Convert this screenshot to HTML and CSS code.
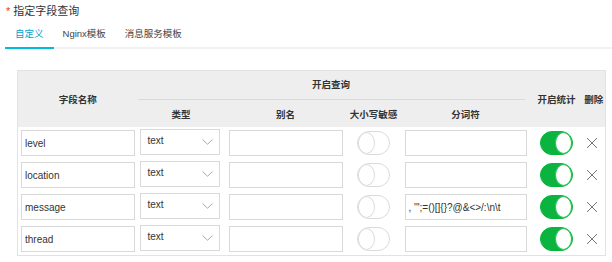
FILE: index.html
```html
<!DOCTYPE html>
<html lang="zh-CN">
<head>
    <meta charset="UTF-8">
    <meta name="viewport" content="width=device-width, initial-scale=1.0">
    <title>指定字段查询</title>
    <link rel="stylesheet" href="styles.css">
</head>
<body>
    <div class="field-title"><span class="required">*</span> 指定字段查询</div>

    <div class="tabs">
        <div class="tab active">自定义</div>
        <div class="tab">Nginx模板</div>
        <div class="tab">消息服务模板</div>
    </div>

    <table class="fields">
        <colgroup>
            <col class="c-name">
            <col class="c-type">
            <col class="c-alias">
            <col class="c-case">
            <col class="c-token">
            <col class="c-stat">
            <col class="c-del">
        </colgroup>
        <thead>
            <tr class="head-top">
                <th rowspan="2">字段名称</th>
                <th colspan="4" class="group"><span>开启查询</span></th>
                <th rowspan="2">开启统计</th>
                <th rowspan="2">删除</th>
            </tr>
            <tr class="head-sub">
                <th>类型</th>
                <th>别名</th>
                <th>大小写敏感</th>
                <th>分词符</th>
            </tr>
        </thead>
        <tbody id="rows"></tbody>
    </table>

    <script>
        const fields = [
            { name: 'level', type: 'text', token: '' },
            { name: 'location', type: 'text', token: '' },
            { name: 'message', type: 'text', token: ', \'";=()[]{}?@&<>/:\\n\\t' },
            { name: 'thread', type: 'text', token: '' }
        ];

        const tbody = document.getElementById('rows');

        fields.forEach(field => {
            const tr = document.createElement('tr');
            tr.innerHTML = `
                <td class="cell-name"><input class="text-input name-input" type="text"></td>
                <td class="cell-type">
                    <div class="select">
                        <span>${field.type}</span>
                        <svg width="11" height="6" viewBox="0 0 11 6"><path d="M0.5 0.5 L5.5 5.2 L10.5 0.5" fill="none" stroke="#a0a0a0" stroke-width="0.9"/></svg>
                    </div>
                </td>
                <td class="cell-alias"><input class="text-input alias-input" type="text"></td>
                <td class="cell-case"><span class="switch"><span class="knob"></span></span></td>
                <td class="cell-token"><input class="text-input token-input" type="text"></td>
                <td class="cell-stat"><span class="switch on"><span class="knob"></span></span></td>
                <td class="cell-del">
                    <svg class="del" width="12" height="12" viewBox="0 0 12 12"><path d="M1 1 L11 11 M11 1 L1 11" stroke="#666" stroke-width="0.9"/></svg>
                </td>`;
            tr.querySelector('.name-input').value = field.name;
            tr.querySelector('.token-input').value = field.token;
            tbody.appendChild(tr);
        });
    </script>
</body>
</html>
```

FILE: styles.css
```css
body {
    margin: 0;
    font-family: "Liberation Sans", "Noto Sans CJK SC", sans-serif;
    font-size: 10px;
    color: #333;
    background: #fff;
}
.field-title {
    padding: 4px 0 0 6px;
    height: 16px;
    font-size: 11px;
    line-height: 14px;
    color: #333;
}
.required {
    color: #e5393c;
}
.tabs {
    display: flex;
    margin: 2px 0 0 5px;
    border-bottom: 2px solid #f1f1f1;
}
.tab {
    padding: 5px 10px 6px;
    line-height: 14px;
    font-size: 9.5px;
    color: #444;
    margin-bottom: -2px;
    border-bottom: 2px solid transparent;
}
.tab + .tab {
    padding-left: 9px;
}
.tab.active {
    color: #00a3cf;
    border-bottom-color: #00bcd8;
}
.fields {
    margin: 21px 0 0 17px;
    width: 588px;
    table-layout: fixed;
    border-collapse: collapse;
    border: 1px solid #e2e2e2;
}
.c-name { width: 120px; }
.c-type { width: 87px; }
.c-alias { width: 122px; }
.c-case { width: 54px; }
.c-token { width: 130px; }
.c-stat { width: 52px; }
.c-del { width: 23px; }
thead th {
    background: #eeeeee;
    font-weight: bold;
    font-size: 9.5px;
    color: #333;
    padding: 0;
    text-align: center;
    white-space: nowrap;
}
.head-top th {
    height: 28px;
}
.head-top th.group {
    padding: 0 6px 0 0;
}
.head-top th.group span {
    display: block;
    height: 28px;
    line-height: 28px;
    border-bottom: 1px solid #d9d9d9;
}
.head-sub th {
    height: 27px;
}
tbody td {
    height: 32px;
    padding: 0;
    vertical-align: middle;
}
.cell-name { padding-left: 3px !important; }
.cell-type { padding-left: 2px !important; }
.cell-alias { padding-left: 4px !important; }
.cell-token { padding-left: 4px !important; }
.cell-case, .cell-stat, .cell-del {
    text-align: center;
}
.text-input {
    display: block;
    box-sizing: border-box;
    height: 26px;
    padding: 0 3px;
    border: 1px solid #d9d9d9;
    font-family: "Liberation Sans", sans-serif;
    font-size: 10px;
    color: #333;
    outline: none;
}
.name-input { width: 114px; }
.alias-input { width: 114px; }
.token-input { width: 122px; }
.select {
    box-sizing: border-box;
    width: 80px;
    height: 26px;
    margin-top: -2px;
    border: 1px solid #d9d9d9;
    display: flex;
    align-items: center;
    justify-content: space-between;
    padding: 0 6px 3px 7px;
    font-size: 10px;
    color: #333;
}
.select svg {
    margin-top: 2px;
}
.switch {
    display: inline-block;
    position: relative;
    vertical-align: middle;
    box-sizing: border-box;
    width: 33px;
    height: 24px;
    border: 1px solid #dadada;
    border-radius: 12px;
    background: #fff;
}
.switch .knob {
    position: absolute;
    top: 0;
    left: 0;
    box-sizing: border-box;
    width: 17px;
    height: 22px;
    border-radius: 50%;
    border: 1px solid #dedede;
    background: #fff;
}
.switch.on {
    background: #0bb43e;
    border-color: #0bb43e;
}
.switch.on .knob {
    left: auto;
    right: 0;
    border-color: #2cc45a;
}
.del {
    display: inline-block;
    vertical-align: middle;
    margin-left: -4px;
}
```
